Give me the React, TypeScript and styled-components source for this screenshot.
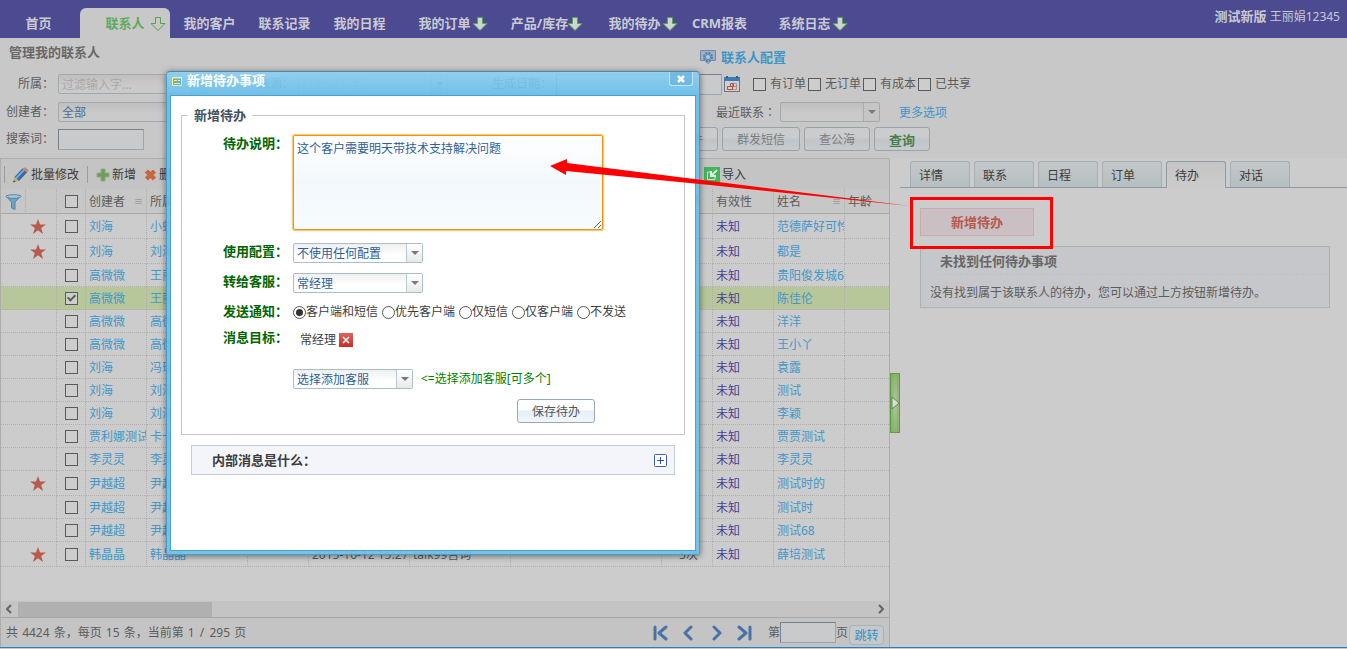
import React from "react";
import styled, { createGlobalStyle, css } from "styled-components";

const GlobalStyle = createGlobalStyle`
  *, *::before, *::after { box-sizing: border-box; }
  body {
    margin: 0;
    background: #c8c8c8;
    color: #5c5c5c;
    font: 12px/16px "Noto Sans", "Noto Sans CJK SC", sans-serif;
  }
  button, input, select, textarea { font: inherit; color: inherit; margin: 0; }
  a { text-decoration: none; }
  a, button, label, th, td { white-space: nowrap; }
`;

/* ---------- page frame ---------- */

const Page = styled.div`
  position: relative;
  min-height: 100vh;
  display: flex;
  flex-direction: column;
  overflow: hidden;
`;

const NavBar = styled.nav`
  display: flex;
  height: 38px;
  padding-left: 1px;
  background: #4c4b91;
`;

const NavItem = styled.a<{ $menu?: boolean; $active?: boolean }>`
  position: relative;
  flex: none;
  width: ${(p) => (p.$active ? 90 : p.$menu ? 95 : 75)}px;
  margin: ${(p) => (p.$active ? "8px 2px 0 4px" : "8px 0 0")};
  border-radius: 6px 6px 0 0;
  background: ${(p) => (p.$active ? "#c8c8c8" : "transparent")};
  color: ${(p) => (p.$active ? "#60a95f" : "#cacad4")};
  font-size: 13px;
  font-weight: bold;
  line-height: 30px;
  text-align: center;
`;

const NavArrow = styled.svg`
  position: absolute;
  right: 3px;
  top: 8px;
`;

const User = styled.div`
  margin: 8px 7px 0 auto;
  color: #c9c9d2;
  white-space: nowrap;
  b { font-size: 13px; }
`;

/* ---------- filters ---------- */

const TitleRow = styled.div`
  display: flex;
  height: 32px;
  font-size: 13px;
  font-weight: bold;
`;

const PageTitle = styled.h1`
  width: 691px;
  margin: 6px 0 0 9px;
  font-size: 13px;
  line-height: 16px;
  color: #686868;
`;

const ConfigLink = styled.a`
  display: flex;
  align-items: center;
  gap: 5px;
  height: 18px;
  margin-top: 10px;
  color: #3f95c8;
`;

const Filters = styled.form`
  padding-bottom: 6px;
`;

const FilterRow = styled.div<{ $h?: number }>`
  display: flex;
  align-items: center;
  height: ${(p) => p.$h ?? 28}px;
`;

const FieldLabel = styled.label<{ $w: number }>`
  flex: none;
  width: ${(p) => p.$w}px;
  margin-right: 4px;
  text-align: right;
`;

const MidColon = styled.span`
  font-family: "Noto Sans CJK TC", sans-serif;
`;

const TextBox = styled.input<{ $w: number }>`
  width: ${(p) => p.$w}px;
  height: 21px;
  padding: 0 4px;
  border: 1px solid #9aa5b0;
  border-top-color: #77808c;
  border-left-color: #77808c;
  background: #c8cacc;
`;

const IconButton = styled.button<{ $left?: number }>`
  display: inline-flex;
  padding: 0 0 0 ${(p) => p.$left ?? 0}px;
  border: 0;
  background: none;
`;

const CheckGroup = styled.div`
  display: flex;
  gap: 2px;
  margin-left: 13px;
`;

const CheckLabel = styled.label`
  display: flex;
  align-items: center;
  gap: 4px;
`;

const Check = styled.input.attrs({ type: "checkbox" })`
  appearance: none;
  flex: none;
  display: block;
  width: 13px;
  height: 13px;
  border: 1px solid #5a5a5a;
  background: #cdcdcd;
  &:checked::after {
    content: "";
    display: block;
    width: 5px;
    height: 8px;
    margin: 0 0 0 3px;
    border: solid #5a5a5a;
    border-width: 0 2px 2px 0;
    transform: rotate(45deg);
  }
`;

const MoreLink = styled.a`
  margin-left: 19px;
  padding-top: 2px;
  color: #3f95c8;
`;

const SearchButtons = styled.div`
  display: flex;
  gap: 4px;
  width: 786px;
  justify-content: flex-end;
`;

const Button = styled.button<{ $w: number; $dim?: boolean; $strong?: boolean }>`
  width: ${(p) => p.$w}px;
  height: 24px;
  padding: 1px 0 0;
  border-radius: 3px;
  border: 1px solid #98a8b8;
  color: #555;
  background: linear-gradient(#fdfeff 45%, #e7eff7 50%, #f0f6fb);
  ${(p) =>
    p.$dim &&
    css`
      border-color: #9aa3aa;
      color: #7c7c7c;
      background: linear-gradient(#cacccd 45%, #c0c5c9 50%, #c6cacd);
    `}
  ${(p) => p.$strong && "color: #47804a; font-size: 13px; font-weight: bold;"}
`;

/* ---------- drop-down ---------- */

const SelectWrap = styled.span<{ $w: number }>`
  position: relative;
  flex: none;
  display: inline-block;
  width: ${(p) => p.$w}px;
  height: 20px;
`;

const SelectBox = styled.select<{ $dim?: boolean; $muted?: boolean }>`
  appearance: none;
  display: block;
  width: 100%;
  height: 20px;
  padding: 2px 20px 0 3px;
  border: 1px solid ${(p) => (p.$dim ? "#9fabb0" : "#a9bfc6")};
  border-radius: 2px;
  background: ${(p) =>
    p.$dim ? "linear-gradient(#bfbfbf, #cacaca 60%)" : "linear-gradient(#efefef, #fff 60%)"};
  color: ${(p) => (p.$muted ? "#a9a9a9" : p.$dim ? "#4a6c96" : "#2f5f98")};
`;

const SelectArrow = styled.span<{ $dim?: boolean }>`
  position: absolute;
  top: 1px;
  right: 1px;
  width: 16px;
  height: 18px;
  display: flex;
  align-items: center;
  justify-content: center;
  border-left: 1px solid ${(p) => (p.$dim ? "#a3adb0" : "#bccbd0")};
  background: ${(p) => (p.$dim ? "#c5c5c5" : "linear-gradient(#fff, #e9e9e9)")};
  pointer-events: none;
  &::after {
    content: "";
    border: solid transparent;
    border-top-color: #7a7a7a;
    border-width: 4px 4px 0;
  }
`;

function Select(p: { id?: string; label?: string; w: number; text: string; dim?: boolean; muted?: boolean }) {
  return (
    <SelectWrap $w={p.w}>
      <SelectBox id={p.id} aria-label={p.label} $dim={p.dim} $muted={p.muted}>
        <option>{p.text}</option>
      </SelectBox>
      <SelectArrow $dim={p.dim} />
    </SelectWrap>
  );
}

/* ---------- contact list ---------- */

const Main = styled.main`
  flex: 1;
  display: flex;
  border-bottom: 1px solid #2b7fc0;
  margin-bottom: 1px;
  background: #cccccc;
`;

const ListPanel = styled.section`
  flex: 1;
  min-width: 0;
  display: flex;
  flex-direction: column;
  border: solid #adadad;
  border-width: 1px 1px 0;
`;

const Toolbar = styled.div`
  display: flex;
  align-items: center;
  height: 30px;
  padding-left: 3px;
  background: #c4c4c4;
`;

const Separator = styled.span<{ $left?: number }>`
  width: 1px;
  height: 17px;
  margin-left: ${(p) => p.$left ?? 0}px;
  background: #9c9c9c;
`;

const Tool = styled.button<{ $left?: number }>`
  display: flex;
  flex: none;
  align-items: center;
  gap: 2px;
  padding: 2px 0 0;
  margin-left: ${(p) => p.$left ?? 8}px;
  border: 0;
  background: none;
  color: #3b3b3b;
`;

const Contacts = styled.table`
  width: 100%;
  table-layout: fixed;
  border-collapse: separate;
  border-spacing: 0;
  th, td {
    height: 23px;
    padding: 2px 0 0 3px;
    border: dotted #aeaeae;
    border-width: 0 1px 1px 0;
    overflow: hidden;
    font-weight: normal;
    text-align: left;
  }
  th {
    height: 25px;
    border-bottom: 1px solid #a8a8a8;
    background: #c7c7c7;
  }
  th:last-child, td:last-child { border-right: 0; }
  td:first-child { border-right: 0; }
  th:nth-child(-n + 3), td:nth-child(-n + 3) { padding: 1px 0 0; }
  td:nth-child(2) { padding-right: 7px; }
  input { margin: 0 auto; }
  svg { display: block; margin: 0 auto; }
`;

const Row = styled.tr<{ $tall?: boolean; $on?: boolean }>`
  && > td {
    height: ${(p) => (p.$tall ? 25 : 23)}px;
    background: ${(p) => (p.$on ? "#b7c799" : "transparent")};
  }
`;

const Cell = styled.td<{ $kind?: "link" | "state" | "mid" }>`
  color: ${(p) => (p.$kind === "link" ? "#4297c9" : p.$kind === "state" ? "#493f94" : "#5c5c5c")};
  ${(p) => p.$kind === "mid" && "&&& { text-align: center; }"}
`;

const HeadText = styled.span`
  display: flex;
  justify-content: space-between;
  padding-right: 3px;
  i { font-style: normal; font-size: 9px; color: #858585; }
`;

const ScrollTrack = styled.div`
  display: flex;
  align-items: center;
  height: 16px;
  margin-top: auto;
  padding: 0 5px;
  background: #c4c4c4;
`;

const ScrollThumb = styled.div`
  width: 194px;
  height: 15px;
  margin: 0 auto 0 6px;
  background: #b0b0b0;
`;

const Pager = styled.div`
  display: flex;
  align-items: center;
  height: 30px;
  padding: 0 5px;
  border-top: 1px solid #a6a6a6;
  background: #c4c4c4;
`;

const Num = styled.span`
  margin: 0 1px;
`;

const PageButtons = styled.div`
  display: flex;
  gap: 12px;
  margin: 0 15px 0 auto;
`;

const JumpButton = styled.button`
  width: 35px;
  height: 20px;
  margin: 5px 0 0 1px;
  padding: 2px 0 0;
  border: 1px solid #a7b2b9;
  border-radius: 4px;
  background: #c6c9cb;
  color: #3790c6;
`;

/* ---------- splitter and detail panel ---------- */

const Splitter = styled.div`
  width: 10px;
  display: flex;
  align-items: center;
`;

const Handle = styled.button`
  display: flex;
  align-items: center;
  width: 10px;
  height: 60px;
  padding: 0;
  border: 1px solid #5f9a45;
  background: radial-gradient(#b0c4a2, #7bae5c);
  svg { flex: none; }
`;

const Detail = styled.section`
  width: 447px;
  flex: none;
`;

const Tabs = styled.div`
  display: flex;
  gap: 4px;
  height: 30px;
  padding: 3px 0 0 10px;
  border-bottom: 1px solid #8d99a5;
`;

const Tab = styled.button<{ $on?: boolean }>`
  width: 60px;
  height: ${(p) => (p.$on ? 27 : 26)}px;
  padding: 2px 0 0 8px;
  border: 1px solid ${(p) => (p.$on ? "#909ba5" : "#a5aeb4")};
  border-bottom: 0;
  border-radius: 3px 3px 0 0;
  background: ${(p) => (p.$on ? "linear-gradient(#c4c4c4, #cccccc)" : "linear-gradient(#c4c8ca, #b5bec0)")};
  color: #3c3c3c;
  text-align: left;
`;

const DetailBody = styled.div`
  padding: 20px 17px 0 20px;
`;

const AddButton = styled.button`
  display: block;
  width: 114px;
  height: 28px;
  padding: 0;
  border: 1px solid #cba9ae;
  background: #cabfc2;
  color: #b7584e;
  font-size: 13px;
  font-weight: bold;
`;

const Notice = styled.div`
  margin-top: 10px;
  height: 62px;
  border: 1px solid #aab0b6;
  background: #c5c7ca;
  h2 {
    margin: 0 0 0 19px;
    height: 28px;
    border-bottom: 1px dashed #bec0c3;
    color: #666;
    font-size: 13px;
    line-height: 28px;
  }
  p { margin: 10px 9px 0; }
`;

/* ---------- dialog ---------- */

const Dialog = styled.div`
  position: absolute;
  z-index: 2;
  left: 166px;
  top: 71px;
  width: 534px;
  height: 484px;
  display: flex;
  flex-direction: column;
  padding: 0 3px 3px;
  border: 1px solid #4f9cc6;
  border-top-color: #4a87a8;
  border-radius: 4px 4px 2px 2px;
  background: linear-gradient(rgba(140, 208, 242, 0.9), rgba(100, 190, 236, 0.9) 24px, rgba(108, 194, 238, 0.9));
  box-shadow: 0 1px 6px rgba(0, 0, 0, 0.5);
`;

const DialogBar = styled.div`
  display: flex;
  align-items: flex-start;
  height: 23px;
  color: #fff;
  font-size: 13px;
  line-height: 16px;
  svg { display: block; }
  > svg { margin: 5px 5px 0 2px; }
`;

const CloseButton = styled.button`
  display: flex;
  align-items: center;
  justify-content: center;
  width: 24px;
  height: 14px;
  margin: 0 3px 0 auto;
  padding: 0;
  border: 1px solid #c6e8fa;
  border-top: 0;
  border-radius: 0 0 3px 3px;
  background: rgba(90, 170, 220, 0.5);
`;

const DialogBody = styled.div`
  flex: 1;
  padding: 10px 10px 0;
  border: 1px solid #4d9fce;
  background: #fff;
  color: #3c3c3c;
`;

const Fieldset = styled.fieldset`
  height: 329px;
  margin: 0;
  padding: 11px 0 0 41px;
  border: 1px solid #c6c6c6;
  legend {
    margin-left: -35px;
    padding: 0 6px;
    color: #42505f;
    font-size: 13px;
    font-weight: bold;
    line-height: 18px;
  }
`;

const FormRow = styled.div<{ $h: number }>`
  display: flex;
  align-items: flex-start;
  height: ${(p) => p.$h}px;
`;

const FormLabel = styled.label`
  flex: none;
  width: 65px;
  margin-right: 5px;
  color: #006400;
  font-size: 13px;
  font-weight: bold;
  line-height: 16px;
`;

const NoteBox = styled.textarea`
  width: 310px;
  height: 95px;
  padding: 5px 3px;
  border: 1px solid #ee960a;
  border-radius: 2px;
  outline: 0;
  box-shadow: 0 0 1px 1px #f3c46c;
  background: linear-gradient(#fff, #f2f8fc 50%, #f6fcfd);
  color: #2f5f98;
  resize: both;
`;

const Radios = styled.div`
  display: flex;
  gap: 4px;
  padding-top: 1px;
  label { display: flex; align-items: center; }
`;

const Radio = styled.input.attrs({ type: "radio" })`
  appearance: none;
  width: 13px;
  height: 13px;
  padding: 2px;
  border: 1px solid #555;
  border-radius: 50%;
  background: #fff;
  &:checked { background: #333 content-box; }
`;

const Target = styled.div`
  display: flex;
  align-items: center;
  gap: 3px;
  padding: 3px 0 0 7px;
`;

const RemoveButton = styled.button`
  display: flex;
  width: 14px;
  height: 14px;
  padding: 3px;
  border: 0;
  background: linear-gradient(#e0625c, #c22f2b);
`;

const Hint = styled.span`
  margin-left: 8px;
  color: #008000;
  line-height: 20px;
`;

const AddTarget = styled.div`
  display: flex;
  height: 30px;
  padding-left: 70px;
`;

const SaveRow = styled.div`
  padding-left: 294px;
`;

const HelpPanel = styled.div`
  display: flex;
  align-items: center;
  justify-content: space-between;
  height: 30px;
  margin: 10px 10px 0;
  padding: 0 7px 0 20px;
  border: 1px solid #c3cdd8;
  background: #f4f5fa;
  font-size: 13px;
  font-weight: bold;
`;

const Annotation = styled.svg`
  position: absolute;
  z-index: 3;
  left: 0;
  top: 0;
  pointer-events: none;
`;

/* ---------- drawings ---------- */

const DownArrow = ({ outline }: { outline?: boolean }) => (
  <NavArrow width="16" height="16" viewBox="0 0 16 16">
    <path
      d="M4.500 1.500h5v6h4.500L7 14.500 0 7.500h4.500z"
      fill={outline ? "#c8c8c8" : "#d0d4d0"}
      stroke="#55a054"
      strokeWidth="1"
    />
  </NavArrow>
);

const ConfigIcon = () => (
  <svg width="16" height="14" viewBox="0 0 16 14">
    <path d="M.5.5h15v10h-4L8 13.500 4.500 10.500h-4z" fill="#9fb0c8" stroke="#7488aa" />
    <circle cx="8" cy="7" r="4" fill="none" stroke="#4f80ae" strokeWidth="2" strokeDasharray="2.200 .9" />
    <circle cx="8" cy="7" r="2.500" fill="#b9c8d8" stroke="#5b89b4" />
  </svg>
);

const CalendarIcon = () => (
  <svg width="16" height="16" viewBox="0 0 16 16">
    <rect x=".5" y="1.500" width="15" height="14" fill="#cfcfd0" stroke="#6d7684" />
    <path d="M0 1h16v4H0z" fill="#3e7bb4" />
    <path d="M3 0v2M13 0v2" stroke="#2d5f96" strokeWidth="2" />
    <path d="M8.500 7.500h4v6h-9v-3h9M8.500 7.500v6" fill="none" stroke="#9a9a9a" />
    <path d="M3.500 10.500h5v3h-5zM6.500 7.500h3v3h-3z" fill="none" stroke="#c2483a" />
  </svg>
);

const PencilIcon = () => (
  <svg width="16" height="16" viewBox="0 0 16 16">
    <path d="M0 15.500L1.500 10 6 14z" fill="#d0a878" />
    <path d="M0 15.500l.8-2.500L2.800 14.800z" fill="#555" />
    <path d="M1.500 10l8-8.500 4.500 4L6 14z" fill="#3a6aa6" />
    <path d="M3 11.300l8-8.300" stroke="#86aed8" strokeWidth="1.800" />
    <path d="M9.500 1.500Q11 0 12.500.5L15 2.500q1 1-1 3z" fill="#c08a68" />
  </svg>
);

const PlusIcon = () => (
  <svg width="14" height="14" viewBox="0 0 14 14">
    <path d="M5 1h4v4h4v4H9v4H5V9H1V5h4z" fill="#6f9c5f" stroke="#8aae7c" strokeLinejoin="round" />
  </svg>
);

const CrossIcon = () => (
  <svg width="13" height="14" viewBox="0 0 13 14">
    <path d="M2.500 3l8 8M10.500 3l-8 8" stroke="#c4663f" strokeWidth="4.500" />
  </svg>
);

const TransferIcon = () => (
  <svg width="16" height="16" viewBox="0 0 16 16">
    <rect width="16" height="16" fill="#43b35c" />
    <path d="M7 5H3.500v7.500H11V9" fill="none" stroke="#cfe0d0" />
    <path d="M13 3L8 8M7 4v5h5" fill="none" stroke="#dfe8df" strokeWidth="2" />
  </svg>
);

const FunnelIcon = () => (
  <svg width="17" height="16" viewBox="0 0 17 16">
    <path d="M1 2l5.500 6v6l3.500 1.500V8l6-6z" fill="#6fa0c6" stroke="#5585a8" strokeLinejoin="round" />
    <ellipse cx="8.500" cy="2.500" rx="7.500" ry="1.800" fill="#a9c7da" stroke="#5585a8" />
  </svg>
);

const Star = () => (
  <svg width="16" height="15" viewBox="0 0 16 15">
    <path d="M8 0l2 5.500h6l-4.800 3.500L13 15 8 11.300 3 15l1.800-6L0 5.500h6z" fill="#b85a4c" />
  </svg>
);

const Chevron = ({ d }: { d: string }) => (
  <svg width="16" height="16" viewBox="0 0 16 16">
    <path d={d} fill="none" stroke="#4a72a8" strokeWidth="3" strokeLinecap="round" strokeLinejoin="round" />
  </svg>
);

const ScrollArrow = ({ d }: { d: string }) => (
  <svg width="6" height="10" viewBox="0 0 6 10">
    <path d={d} fill="none" stroke="#666" strokeWidth="2" />
  </svg>
);

const FormIcon = () => (
  <svg width="10" height="9" viewBox="0 0 10 9">
    <path d="M.5.5h9v8h-9z" fill="#5fb0d8" stroke="#f4ee8c" />
    <path d="M0 1h10M2 3.500h3M2 6.500h6M6 3.500h2" stroke="#f4ee8c" />
  </svg>
);

/* ---------- data ---------- */

type NavEntry = { text: string; menu?: boolean; active?: boolean };
const nav: NavEntry[] = [
  { text: "首页" },
  { text: "联系人", menu: true, active: true },
  { text: "我的客户" },
  { text: "联系记录" },
  { text: "我的日程" },
  { text: "我的订单", menu: true },
  { text: "产品/库存", menu: true },
  { text: "我的待办", menu: true },
  { text: "CRM报表" },
  { text: "系统日志", menu: true },
];

const columns = [25, 31, 29, 61, 101, 61, 101, 101, 151, 51, 61, 71];

type Contact = { by: string; owner: string; name: string; star?: boolean; on?: boolean; date?: string; from?: string; times?: string };
const contacts: Contact[] = [
  { by: "刘海", owner: "小蚊子", name: "范德萨好可怜", star: true },
  { by: "刘海", owner: "刘海", name: "都是", star: true },
  { by: "高微微", owner: "王丽娟", name: "贵阳俊发城6号" },
  { by: "高微微", owner: "王丽娟", name: "陈佳伦", on: true },
  { by: "高微微", owner: "高微微", name: "洋洋" },
  { by: "高微微", owner: "高微微", name: "王小丫" },
  { by: "刘海", owner: "冯瑞", name: "袁露" },
  { by: "刘海", owner: "刘海", name: "测试" },
  { by: "刘海", owner: "刘海", name: "李颖" },
  { by: "贾利娜测试", owner: "卡卡", name: "贾贾测试" },
  { by: "李灵灵", owner: "李灵灵", name: "李灵灵" },
  { by: "尹越超", owner: "尹越超", name: "测试时的", star: true },
  { by: "尹越超", owner: "尹越超", name: "测试时" },
  { by: "尹越超", owner: "尹越超", name: "测试68" },
  { by: "韩晶晶", owner: "韩晶晶", name: "薛培测试", star: true, date: "2015-10-12 15:27", from: "talk99咨询", times: "5次" },
];

export default function App() {
  return (
    <Page>
      <GlobalStyle />
      <NavBar>
        {nav.map((n) => (
          <NavItem key={n.text} href="#" $menu={n.menu} $active={n.active}>
            {n.text}
            {n.menu && <DownArrow outline={n.active} />}
          </NavItem>
        ))}
        <User>
          <b>测试新版</b> 王丽娟12345
        </User>
      </NavBar>

      <TitleRow>
        <PageTitle>管理我的联系人</PageTitle>
        <ConfigLink href="#">
          <ConfigIcon />
          联系人配置
        </ConfigLink>
      </TitleRow>

      <Filters>
        <FilterRow>
          <FieldLabel htmlFor="owner" $w={54}>所属：</FieldLabel>
          <Select id="owner" w={150} text="过滤输入字..." dim muted />
          <FieldLabel htmlFor="source" $w={86}>来源：</FieldLabel>
          <Select id="source" w={150} text="过滤输入字..." dim muted />
          <FieldLabel htmlFor="created" $w={104}>生成日期：</FieldLabel>
          <TextBox id="created" $w={166} />
          <IconButton type="button" aria-label="选择日期" $left={2}>
            <CalendarIcon />
          </IconButton>
          <CheckGroup>
            {["有订单", "无订单", "有成本", "已共享"].map((t) => (
              <CheckLabel key={t}>
                <Check />
                {t}
              </CheckLabel>
            ))}
          </CheckGroup>
        </FilterRow>
        <FilterRow>
          <FieldLabel htmlFor="creator" $w={54}>创建者：</FieldLabel>
          <Select id="creator" w={150} text="全部" dim />
          <FieldLabel htmlFor="recent" $w={568}>最近联系<MidColon lang="zh-TW">：</MidColon></FieldLabel>
          <Select id="recent" w={100} text="" dim />
          <MoreLink href="#">更多选项</MoreLink>
        </FilterRow>
        <FilterRow $h={26}>
          <FieldLabel htmlFor="word" $w={54}>搜索词：</FieldLabel>
          <TextBox id="word" $w={86} />
          <SearchButtons>
            <Button type="button" $w={78} $dim>群发邮件</Button>
            <Button type="button" $w={78} $dim>群发短信</Button>
            <Button type="button" $w={66} $dim>查公海</Button>
            <Button type="button" $w={56} $dim $strong>查询</Button>
          </SearchButtons>
        </FilterRow>
      </Filters>

      <Main>
        <ListPanel>
          <Toolbar>
            <Separator />
            <Tool><PencilIcon />批量修改</Tool>
            <Separator $left={8} />
            <Tool><PlusIcon />新增</Tool>
            <Tool><CrossIcon />删除</Tool>
            <Tool $left={471}><TransferIcon />导出</Tool>
            <Tool><TransferIcon />导入</Tool>
          </Toolbar>
          <Contacts>
            <colgroup>
              {columns.map((w, i) => <col key={i} width={w} />)}
              <col />
            </colgroup>
            <thead>
              <tr>
                <th><FunnelIcon /></th>
                <th />
                <th><Check aria-label="全选" /></th>
                <th><HeadText>创建者<i>≡</i></HeadText></th>
                <th>所属</th>
                <th />
                <th />
                <th />
                <th />
                <th>未联系</th>
                <th>有效性</th>
                <th><HeadText>姓名<i>≡</i></HeadText></th>
                <th>年龄</th>
              </tr>
            </thead>
            <tbody>
              {contacts.map((c, i) => (
                <Row key={i} $tall={c.star} $on={c.on}>
                  <td />
                  <td>{c.star && <Star />}</td>
                  <td><Check aria-label={c.name} defaultChecked={c.on} /></td>
                  <Cell $kind="link">{c.by}</Cell>
                  <Cell $kind="link">{c.owner}</Cell>
                  <td />
                  <Cell>{c.date}</Cell>
                  <Cell>{c.from}</Cell>
                  <td />
                  <Cell $kind="mid">{c.times}</Cell>
                  <Cell $kind="state">未知</Cell>
                  <Cell $kind="link">{c.name}</Cell>
                  <td />
                </Row>
              ))}
            </tbody>
          </Contacts>
          <ScrollTrack>
            <ScrollArrow d="M5 1L1 5l4 4" />
            <ScrollThumb />
            <ScrollArrow d="M1 1l4 4-4 4" />
          </ScrollTrack>
          <Pager>
            <span>
              共 <Num>4424</Num> 条，每页 <Num>15</Num> 条，当前第 <Num>1</Num> <Num>/</Num> <Num>295</Num> 页
            </span>
            <PageButtons>
              <IconButton aria-label="第一页"><Chevron d="M2 2v12M13 2L6 8l7 6" /></IconButton>
              <IconButton aria-label="上一页"><Chevron d="M10 2L4 8l6 6" /></IconButton>
              <IconButton aria-label="下一页"><Chevron d="M5 2l6 6-6 6" /></IconButton>
              <IconButton aria-label="最后一页"><Chevron d="M2 2l7 6-7 6M13 2v12" /></IconButton>
            </PageButtons>
            <label htmlFor="page">第</label>
            <TextBox id="page" $w={56} />
            页
            <JumpButton>跳转</JumpButton>
          </Pager>
        </ListPanel>

        <Splitter>
          <Handle aria-label="收起">
            <svg width="8" height="14" viewBox="0 0 8 14">
              <path d="M1 1l7 6-7 6z" fill="#dcdcdc" stroke="#5f8a4c" />
            </svg>
          </Handle>
        </Splitter>

        <Detail>
          <Tabs>
            {["详情", "联系", "日程", "订单", "待办", "对话"].map((t) => (
              <Tab key={t} $on={t === "待办"}>{t}</Tab>
            ))}
          </Tabs>
          <DetailBody>
            <AddButton>新增待办</AddButton>
            <Notice>
              <h2>未找到任何待办事项</h2>
              <p>没有找到属于该联系人的待办，您可以通过上方按钮新增待办。</p>
            </Notice>
          </DetailBody>
        </Detail>
      </Main>

      <Dialog role="dialog" aria-label="新增待办事项">
        <DialogBar>
          <FormIcon />
          <b>新增待办事项</b>
          <CloseButton aria-label="关闭">
            <svg width="8" height="8" viewBox="0 0 8 8">
              <path d="M1 1l6 6M7 1L1 7" stroke="#fff" strokeWidth="2.500" />
            </svg>
          </CloseButton>
        </DialogBar>
        <DialogBody>
          <Fieldset>
            <legend>新增待办</legend>
            <FormRow $h={108}>
              <FormLabel htmlFor="note">待办说明：</FormLabel>
              <NoteBox id="note" defaultValue="这个客户需要明天带技术支持解决问题" />
            </FormRow>
            <FormRow $h={30}>
              <FormLabel htmlFor="config">使用配置：</FormLabel>
              <Select id="config" w={130} text="不使用任何配置" />
            </FormRow>
            <FormRow $h={30}>
              <FormLabel htmlFor="agent">转给客服：</FormLabel>
              <Select id="agent" w={130} text="常经理" />
            </FormRow>
            <FormRow $h={26}>
              <FormLabel as="span">发送通知：</FormLabel>
              <Radios role="radiogroup" aria-label="发送通知">
                {["客户端和短信", "优先客户端", "仅短信", "仅客户端", "不发送"].map((t, i) => (
                  <label key={t}>
                    <Radio name="notify" defaultChecked={i === 0} />
                    {t}
                  </label>
                ))}
              </Radios>
            </FormRow>
            <FormRow $h={40}>
              <FormLabel as="span">消息目标：</FormLabel>
              <Target>
                常经理
                <RemoveButton type="button" aria-label="移除">
                  <svg width="8" height="8" viewBox="0 0 8 8">
                    <path d="M1 1l6 6M7 1L1 7" stroke="#fff" strokeWidth="1.500" />
                  </svg>
                </RemoveButton>
              </Target>
            </FormRow>
            <AddTarget>
              <Select label="选择添加客服" w={120} text="选择添加客服" />
              <Hint>&lt;=选择添加客服[可多个]</Hint>
            </AddTarget>
            <SaveRow>
              <Button type="button" $w={78}>保存待办</Button>
            </SaveRow>
          </Fieldset>
          <HelpPanel>
            内部消息是什么：
            <IconButton aria-label="展开">
              <svg width="13" height="13" viewBox="0 0 13 13">
                <rect x=".5" y=".5" width="12" height="12" rx="1" fill="#fff" stroke="#3f5fb8" />
                <path d="M3 6.500h7M6.500 3v7" stroke="#2f50b0" />
              </svg>
            </IconButton>
          </HelpPanel>
        </DialogBody>
      </Dialog>

      <Annotation width="1060" height="260" viewBox="0 0 1060 260" aria-hidden="true">
        <path d="M550 166l17-7v4l143 18 200 25-200-21-144-14v4z" fill="#f00" />
        <rect x="911.500" y="198.500" width="140" height="49" fill="none" stroke="#f00" strokeWidth="3" />
      </Annotation>
    </Page>
  );
}
